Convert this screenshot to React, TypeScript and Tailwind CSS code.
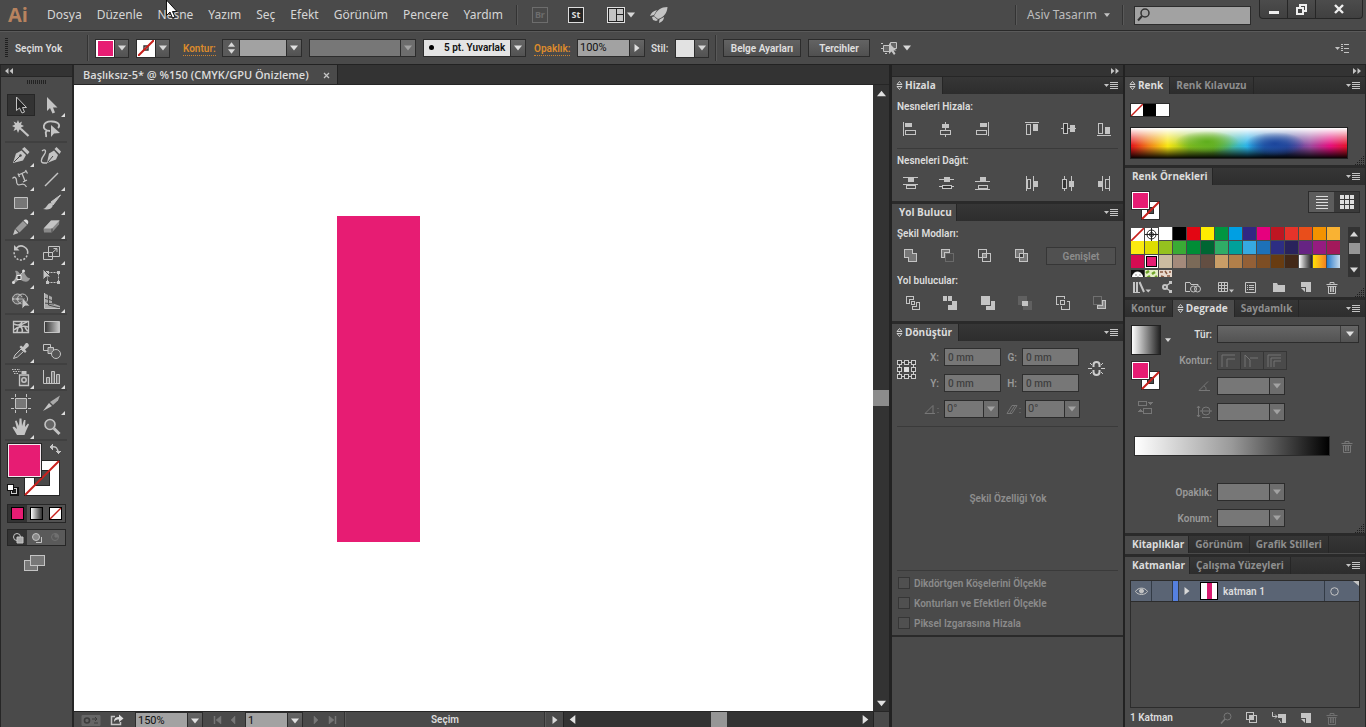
import type { ReactNode } from "react";
import clsx from "clsx";

const PINK = "#e71c73";
const ICON = "#c4c4c4";

const menus = ["Dosya", "Düzenle", "Nesne", "Yazım", "Seç", "Efekt", "Görünüm", "Pencere", "Yardım"];

const swatchRows = [
  ["#ffffff", "#000000", "#e30613", "#ffed00", "#009640", "#009fe3", "#312783", "#e6007e", "#be1622", "#e6332a", "#e94e1b", "#f39200", "#f9b233"],
  ["#fcea10", "#dedc00", "#95c11f", "#3aaa35", "#008d36", "#006633", "#2fac66", "#00a19a", "#36a9e1", "#1d71b8", "#2d2e83", "#29235c", "#662483", "#951b81", "#a3195b"],
  ["#d60b52", "#e71c73", "#cbbba0", "#a48a7b", "#7b6a58", "#634e42", "#ca9e67", "#b17f4a", "#936037", "#7d4e24", "#683c11", "#432918"],
];

type SvgProps = { w: number; h: number; children: ReactNode; color?: string; crisp?: boolean; className?: string };

function Svg({ w, h, children, color = ICON, crisp, className }: SvgProps) {
  return (
    <svg
      width={w}
      height={h}
      viewBox={`0 0 ${w} ${h}`}
      fill="none"
      stroke={color}
      shapeRendering={crisp ? "crispEdges" : undefined}
      className={clsx("block shrink-0", className)}
      aria-hidden="true"
    >
      {children}
    </svg>
  );
}

function Arrow({ dir = "down", color = "#d8d8d8", size = 8 }: { dir?: "down" | "up" | "left" | "right"; color?: string; size?: number }) {
  const d = {
    down: "M0 1.5H8L4 6.5Z",
    up: "M0 6.5H8L4 1.5Z",
    left: "M6.5 0V8L1.5 4Z",
    right: "M1.5 0V8L6.5 4Z",
  }[dir];
  return (
    <svg width={size} height={size} viewBox="0 0 8 8" className="block shrink-0" aria-hidden="true">
      <path d={d} fill={color} />
    </svg>
  );
}

function Divider({ className }: { className?: string }) {
  return <div className={clsx("w-[2px] shrink-0 border-l border-[#333] bg-[#595959]", className)} />;
}

// A text value or an empty field with a drop-down box on its right
function Combo({ label, value = "", className, tone = "light", dir = "down" }: {
  label: string;
  value?: string;
  className?: string;
  tone?: "light" | "off" | "white" | "flat";
  dir?: "down" | "right";
}) {
  const off = tone === "off";
  return (
    <span className={clsx("relative block h-[18px] shrink-0 border border-[#2c2c2c]", className)}>
      <select
        aria-label={label}
        disabled={off}
        className={clsx(
          "block h-full w-full appearance-none pr-4 leading-4 opacity-100 outline-none",
          tone === "light" && "bg-[#a2a2a2] pl-[2px] text-[11px] font-normal text-[#111]",
          tone === "off" && "bg-[#777] pl-[2px] text-[11px] font-normal text-[#3c3c3c]",
          tone === "white" && "bg-[#e4e4e4] pl-5 text-[10px] font-semibold text-[#111]",
          tone === "flat" && "bg-linear-to-b from-[#666] to-[#535353]"
        )}
      >
        <option>{value}</option>
      </select>
      <span
        className={clsx(
          "pointer-events-none absolute inset-y-0 right-0 flex w-[15px] items-center justify-center border-l border-[#2c2c2c]",
          off ? "bg-[#6d6d6d]" : "bg-linear-to-b from-[#666] to-[#525252]",
          tone === "flat" && "w-[18px] border-[#3c3c3c]"
        )}
      >
        <Arrow dir={dir} color={off ? "#a2a2a2" : "#e0e0e0"} />
      </span>
    </span>
  );
}

function None({ size = 14, box = false }: { size?: number; box?: boolean }) {
  return (
    <svg width={size} height={size} viewBox="0 0 16 16" className="block shrink-0" aria-hidden="true">
      <path d="M0 0H16V16H0Z" fill="#fff" />
      {box && <path d="M6 6H10V10H6Z" fill="#fff" stroke="#333" strokeWidth="1.4" />}
      <path d="M0 16L16 0" stroke="#c8201c" strokeWidth="2" />
    </svg>
  );
}

function SwatchDrop({ label, children }: { label: string; children: ReactNode }) {
  return (
    <button aria-label={label} className="flex h-[19px] w-[34px] shrink-0 border border-[#2c2c2c]">
      <span className="flex h-full w-[18px] items-center justify-center bg-white">{children}</span>
      <span className="flex h-full flex-1 items-center justify-center border-l border-[#2c2c2c] bg-linear-to-b from-[#666] to-[#525252]">
        <Arrow />
      </span>
    </button>
  );
}

function FillStroke() {
  return (
    <Svg w={30} h={30} crisp>
      <path d="M10.5 10.5H28.5V28.5H10.5Z" fill="#fff" stroke="#2c2c2c" />
      <path d="M16.5 16.5H22.5V22.5H16.5Z" fill="#4a4a4a" stroke="#2c2c2c" />
      <path d="M11 28L28 11" stroke="#c8201c" strokeWidth="2" shapeRendering="auto" />
      <path d="M0.5 0.5H18.5V18.5H0.5Z" fill="#fff" stroke="#2c2c2c" />
      <path d="M2 2H17V17H2Z" fill={PINK} stroke="none" />
    </Svg>
  );
}

function MenuIcon() {
  return (
    <Svg w={15} h={10} crisp>
      <path d="M0 3H5L2.500 6Z" fill={ICON} stroke="none" shapeRendering="auto" />
      <path d="M6 1.500H14M6 3.500H14M6 5.500H14M6 7.500H14" />
    </Svg>
  );
}

function TabBar({ tabs, active = 0, updown = true, menu = true }: { tabs: string[]; active?: number; updown?: boolean; menu?: boolean }) {
  return (
    <div className="flex h-[17px] shrink-0 items-stretch bg-linear-to-b from-[#363636] to-[#2d2d2d] font-['Open_Sans','Noto_Sans',sans-serif]">
      {tabs.map((tab, i) => (
        <button
          key={tab}
          className={clsx(
            "flex items-center gap-[2px] border-r border-[#262626] pb-px text-[10px] leading-4 font-bold",
            i === active ? "bg-[#4a4a4a] text-[#dcdcdc]" : "px-[6px] text-[#8e8e8e]",
            i === active && (updown ? "pr-[6px] pl-[4px]" : "pr-[4px] pl-[7px]")
          )}
        >
          {i === active && updown && (
            <Svg w={7} h={11} color="#d0d0d0">
              <path d="M1 4.500L3.500 1.500L6 4.500ZM1 6.500L3.500 9.500L6 6.500Z" />
            </Svg>
          )}
          {tab}
        </button>
      ))}
      {menu && (
        <button aria-label="Panel menüsü" className="mr-1 ml-auto flex items-center">
          <MenuIcon />
        </button>
      )}
    </div>
  );
}

function Grip() {
  return (
    <Svg w={10} h={10} color="#1e1e1e" crisp className="absolute right-0 bottom-0">
      <path d="M8 1.500H9M6 3.500H7M8 3.500H9M4 5.500H5M6 5.500H7M8 5.500H9M2 7.500H3M4 7.500H5M6 7.500H7M8 7.500H9M0 9.500H1M2 9.500H3M4 9.500H5M6 9.500H7M8 9.500H9" />
    </Svg>
  );
}

function Trash({ color = ICON }: { color?: string }) {
  return (
    <Svg w={12} h={13} color={color}>
      <path d="M0.500 3.500H11.500M4 3V1.500H8V3M1.500 5.500H10.500M2.500 6V12.500H9.500V6M4.500 6V11M6 6V11M7.500 6V11" />
    </Svg>
  );
}

function NewItem() {
  return (
    <Svg w={12} h={12}>
      <path d="M1 1H11V11H6V6H1Z" fill={ICON} stroke="none" />
      <path d="M1 7H5V11Z" fill={ICON} stroke="none" />
    </Svg>
  );
}

function Tool({ label, active, more, children }: { label: string; active?: boolean; more?: boolean; children: ReactNode }) {
  return (
    <button aria-label={label} className="relative flex h-6 w-[31px] items-center justify-center">
      <span className={clsx("flex h-[22px] w-7 items-center justify-center", active && "border border-[#262626] bg-[#333]")}>
        <Svg w={24} h={24}>
          {children}
        </Svg>
      </span>
      {more && (
        <Svg w={4} h={4} className="absolute right-[2px] bottom-0">
          <path d="M4 0V4H0Z" fill="#ddd" stroke="none" />
        </Svg>
      )}
    </button>
  );
}

function ToolGroup({ children }: { children: ReactNode }) {
  return <div className="grid grid-cols-2 border-b-2 border-[#404040]">{children}</div>;
}

function Toolbox() {
  return (
    <aside className="flex w-[74px] shrink-0 flex-col border-r-2 border-l border-[#262626] bg-[#4a4a4a]">
      <div className="flex h-3 items-center border-b border-[#262626] bg-[#333] pl-1">
        <Svg w={8} h={6}>
          <path d="M3.500 0V6L0 3ZM8 0V6L4.500 3Z" fill={ICON} stroke="none" />
        </Svg>
      </div>
      <div className="flex h-4 justify-center pt-[3px]">
        <Svg w={20} h={5} color="#222" crisp>
          <path d="M0.500 0V4M2.500 0V4M4.500 0V4M6.500 0V4M8.500 0V4M10.500 0V4M12.500 0V4M14.500 0V4M16.500 0V4M18.500 0V4" />
        </Svg>
      </div>
      <div className="ml-1 w-[62px]">
        <ToolGroup>
          <Tool label="Seçim" active>
            <path d="M7.500 4V17.500L10.500 15L13 20L15.500 19L13.500 14.500H17.500Z" fill="#262626" />
          </Tool>
          <Tool label="Doğrudan Seçim" more>
            <path d="M7 4V18L10 15L12.500 20.500L15 19.500L13 14.500H17.500Z" fill={ICON} stroke="none" />
          </Tool>
          <Tool label="Sihirli Değnek">
            <path d="M9 3L10.200 6L13 4.500L12 7.500L15 9L12 10.500L13.500 13.500L10.500 12.500L9 16L7.700 12.500L4.500 14L6 10.500L3 9L6 7.500L4.500 4.500L7.700 6Z" fill={ICON} stroke="none" />
            <path d="M12 12L19.500 19" strokeWidth="2.200" />
          </Tool>
          <Tool label="Kement">
            <path d="M10 14C0 13 3 4 12 4.500C20 5 20 9 18 11M7 13.500C4 16 7 17 6 20" strokeWidth="1.800" />
            <path d="M11 8V20L14 16.500L20 16Z" fill={ICON} stroke="none" />
          </Tool>
        </ToolGroup>
        <ToolGroup>
          <Tool label="Kalem" more>
            <path d="M4 20L7 10.500L12.500 7.500L17 12L14 17.500Z" fill={ICON} stroke="none" />
            <path d="M13 6L15.500 4L20.500 9L18.500 11.500Z" fill={ICON} stroke="none" />
            <path d="M5 19L11 13" stroke="#444" />
            <circle cx="11.500" cy="12.500" r="1.200" fill="#444" stroke="none" />
          </Tool>
          <Tool label="Eğrilik">
            <path d="M7 20L9 10.500L14 7.500L18 12L16 16.500Z" fill={ICON} stroke="none" />
            <path d="M14.500 6L16.500 4L21 8.500L19.500 11Z" fill={ICON} stroke="none" />
            <path d="M8 19L13 13" stroke="#444" />
            <path d="M2 8C5 5 7 8 4 12C1 16 0 20 4 20H7" strokeWidth="1.300" />
          </Tool>
          <Tool label="Yol Üzerinde Yazı" more>
            <path d="M3.500 11.500C5 9 7.500 10.500 7.500 13.500C7.500 18 9 18.500 12 17.500C15 16.500 16 17.500 17.500 20" strokeWidth="1.300" />
            <path d="M9.500 8L17 4.500M16.500 3L18.500 6.500M9 6.500L10.500 10M13 6.500L16 14M14 15L18 13" strokeWidth="1.300" />
          </Tool>
          <Tool label="Çizgi Parçası" more>
            <path d="M5 19L18 6" strokeWidth="1.400" />
          </Tool>
          <Tool label="Dikdörtgen" more>
            <path d="M5.500 6.500H18.500V17.500H5.500Z" fill="#777" />
          </Tool>
          <Tool label="Boya Fırçası" more>
            <path d="M20.500 4L11 11L13 14Z" fill={ICON} />
            <path d="M3 18C7 17 7 12 11 12C15 14 12 20 3 18Z" fill={ICON} stroke="none" />
          </Tool>
          <Tool label="Kurşun Kalem" more>
            <path d="M4 20L6 14L9.500 18Z" fill={ICON} stroke="none" />
            <path d="M6.500 13.500L14 6L18 10L10.500 17.500Z" fill="#999" stroke="none" />
            <path d="M14.500 5.500C17 3 21 6 18.500 9.500Z" fill="#ddd" stroke="none" />
          </Tool>
          <Tool label="Silgi" more>
            <path d="M3.500 14L11 5.500L19.500 5L19 9.500L12 17.500H4Z" fill="#888" stroke="none" />
            <path d="M3.500 13.500L11 5.500H19.500L12 13.500Z" fill={ICON} stroke="none" />
            <path d="M12 13.500V17.500" stroke="#444" />
          </Tool>
        </ToolGroup>
        <ToolGroup>
          <Tool label="Döndür" more>
            <path d="M7.500 7A6.500 6.500 0 0 1 18.500 13" strokeWidth="1.500" />
            <path d="M18 14.500A6.500 6.500 0 0 1 5.500 10.500" strokeWidth="1.500" strokeDasharray="2 1.500" />
            <path d="M5 4V9.500H10.500Z" fill={ICON} stroke="none" />
          </Tool>
          <Tool label="Ölçekle" more>
            <path d="M3.500 11.500H12.500V18.500H3.500ZM8.500 5.500H19.500V15.500H8.500Z" />
            <path d="M12 12L17 7.500M13.500 7.500H17V11" />
          </Tool>
          <Tool label="Genişlik" more>
            <path d="M6 6C10 4 10 11 13 8C16 4 16 14 21 13C20 18 15 17 12 15C9 13 7 20 3 17C7 14 8 9 6 6Z" fill="#999" stroke="none" />
            <path d="M4 17.500L15 6" />
            <path d="M8 10.500H12V14.500H8Z" fill="#444" stroke="#eee" />
            <circle cx="4.500" cy="17.500" r="1.500" fill="#ddd" stroke="none" />
            <circle cx="14.500" cy="6" r="1.500" fill="#ddd" stroke="none" />
          </Tool>
          <Tool label="Serbest Dönüştür">
            <path d="M7.500 7.500H18.500V17.500H7.500Z" strokeDasharray="2 1" />
            <path d="M6 6H9V9H6ZM17 6H20V9H17ZM17 16H20V19H17ZM6 16H9V19H6Z" fill={ICON} stroke="none" />
            <path d="M3 4V15L6 12H11Z" fill={ICON} stroke="#4a4a4a" />
          </Tool>
          <Tool label="Şekil Oluşturucu" more>
            <circle cx="8.500" cy="10" r="5" fill="#666" />
            <circle cx="13.500" cy="10" r="5" />
            <path d="M4 10H16" stroke="#eee" strokeDasharray="1.500 1" />
            <path d="M13 8V20L16 17H21Z" fill={ICON} stroke="#4a4a4a" strokeWidth="0.800" />
          </Tool>
          <Tool label="Perspektif Izgarası" more>
            <path d="M4 4L12 8V14L20 17V19H4Z" fill="#aaa" stroke="none" />
            <path d="M8.500 4V16L20 19M4 9L12 11.500M4 14L14 15" stroke="#4a4a4a" />
            <path d="M4.500 4V19.500H20" />
          </Tool>
        </ToolGroup>
        <ToolGroup>
          <Tool label="Kafes">
            <path d="M4.500 6.500H19.500V17.500H4.500Z" fill="#444" strokeWidth="1.300" />
            <path d="M5 9C9 11 12 10 13 7M5 15C8 12 14 10 19 12M8 17C8 13 12 9 18 7M11 11C13 13 14 15 13 17M15 11C17 13 17 15 19 16" strokeWidth="1.600" />
          </Tool>
          <Tool label="Degrade">
            <defs>
              <linearGradient id="tool-grad">
                <stop stopColor="#333" />
                <stop offset="1" stopColor="#ccc" />
              </linearGradient>
            </defs>
            <path d="M4.500 6.500H19.500V17.500H4.500Z" fill="url(#tool-grad)" />
          </Tool>
          <Tool label="Damlalık" more>
            <path d="M4.500 19.500L6 16L12 10L14.500 12.500L8.500 18Z" fill="#555" />
            <path d="M10.500 8L12 6.500L14 8L16.500 4.500C18 3 21 5.500 19.500 7.500L16 10.500L17.500 12.500L16 14Z" fill={ICON} stroke="none" />
          </Tool>
          <Tool label="Karışım">
            <path d="M3.500 5.500H10.500V11.500H3.500Z" />
            <path d="M8 8.500H13.500V14.500H8Z" fill="#777" />
            <circle cx="16" cy="15" r="4.500" fill="#555" />
          </Tool>
        </ToolGroup>
        <ToolGroup>
          <Tool label="Simge Püskürtücü" more>
            <path d="M10.500 10H19.500V20.500H10.500Z" fill="#555" strokeWidth="1.300" />
            <path d="M12.500 6H17.500V9H12.500Z" fill={ICON} stroke="none" />
            <circle cx="15" cy="15" r="2.200" strokeWidth="1.500" />
            <path d="M3 4.500H11M4 6.500H12M5 8.500H10" strokeDasharray="1.500 1" />
          </Tool>
          <Tool label="Sütun Grafiği" more>
            <path d="M3.500 5V18.500H20" />
            <path d="M6.500 18V12.500H9.500V18M11.500 18V6.500H14.500V18M16.500 18V9.500H19.500V18" fill="#777" />
          </Tool>
        </ToolGroup>
        <ToolGroup>
          <Tool label="Çalışma Yüzeyi">
            <path d="M6.500 7.500H17.500V17.500H6.500Z" fill="#777" />
            <path d="M2 7.500H5M19 7.500H22M2 17.500H5M19 17.500H22M6.500 3V6M17.500 3V6M6.500 19V22M17.500 19V22" />
          </Tool>
          <Tool label="Dilim" more>
            <path d="M3 20L9 12L12 15Z" fill={ICON} stroke="none" />
            <path d="M10 11L20 4.500L18 9.500L13 14Z" fill="#aaa" stroke="none" />
          </Tool>
          <Tool label="El" more>
            <path d="M8 20L3.500 12.500L5 11.500L8 14L6 6L7.500 5.500L10 11L10.500 3.500H12.500L13 11L15 5H16.500L16 12L19 8.500L20 9.500L17 16L15.500 20Z" fill={ICON} stroke="none" />
          </Tool>
          <Tool label="Büyüteç">
            <circle cx="10" cy="9.500" r="5" fill="#666" strokeWidth="1.600" />
            <path d="M14 13.500L19.500 19" strokeWidth="3" />
          </Tool>
        </ToolGroup>
      </div>
      <div className="flex flex-col pl-[5px]">
        <button aria-label="Dolgu ve kontur" className="mt-px ml-px">
          <Svg w={56} h={56} crisp>
            <path d="M17.500 18.500H52.500V53.500H17.500Z" fill="#fff" stroke="#262626" />
            <path d="M27.500 28.500H42.500V43.500H27.500Z" fill="#4a4a4a" stroke="#262626" />
            <path d="M18 53L52 19" stroke="#c8201c" strokeWidth="2" shapeRendering="auto" />
            <path d="M0.500 1.500H34.500V35.500H0.500Z" fill="#f4e8ee" stroke="#262626" />
            <path d="M2 3H33V34H2Z" fill={PINK} stroke="none" />
            <path d="M44 5C49 4 51 6 51 11" strokeWidth="1.400" shapeRendering="auto" />
            <path d="M46 2V8L42 5ZM48 9H54L51 12Z" fill={ICON} stroke="none" />
            <path d="M4.500 46.500H10.500V52.500H4.500Z" fill="#222" stroke="#111" strokeWidth="3" />
            <path d="M4.500 46.500H9.500V51.500H4.500Z" stroke="#ccc" />
            <path d="M0.500 42.500H6.500V48.500H0.500Z" fill="#fff" stroke="#111" />
          </Svg>
        </button>
        <div className="mt-[6px] ml-px flex h-[19px] w-[59px] border border-[#262626] bg-[#525252]">
          <button aria-label="Renk" className="flex w-[19px] items-center justify-center bg-[#333]">
            <span className="size-[13px] border border-black bg-[#e71c73]" />
          </button>
          <button aria-label="Degrade dolgu" className="flex w-[19px] items-center justify-center">
            <span className="size-[13px] border border-black bg-linear-to-r from-white to-[#333]" />
          </button>
          <button aria-label="Yok" className="flex flex-1 items-center justify-center">
            <span className="border border-black">
              <None size={11} />
            </span>
          </button>
        </div>
        <div className="mt-[6px] ml-px flex h-[17px] w-[59px] border border-[#262626] bg-[#5a5a5a]">
          {["Normal çizim", "Arkaya çizim", "İçine çizim"].map((label, i) => (
            <button key={label} aria-label={label} className={clsx("flex w-[19px] items-center justify-center", i === 0 && "bg-[#333]")}>
              <Svg w={12} h={12} color={i === 2 ? "#707070" : ICON}>
                <circle cx="5" cy="5" r="3.500" fill={i === 1 ? "#888" : "none"} />
                <path
                  d={["M5 5H11V11H5Z", "M10.500 5V10.500H5", "M5 5V1.500A3.500 3.500 0 0 1 8.500 5Z"][i]}
                  fill={["#aaa", "none", "#707070"][i]}
                />
              </Svg>
            </button>
          ))}
        </div>
        <button aria-label="Ekran modu" className="mt-2 ml-[18px]">
          <Svg w={22} h={18} crisp>
            <path d="M0.500 6.500H13.500V16.500H0.500Z" fill="#777" />
            <path d="M6.500 1.500H20.500V11.500H6.500Z" fill="#777" />
          </Svg>
        </button>
      </div>
    </aside>
  );
}

function MenuBar() {
  return (
    <header className="flex h-[31px] shrink-0 items-center border-b border-[#2a2a2a] bg-[#4a4a4a] font-['Noto_Sans',sans-serif] text-xs text-[#d6d6d6]">
      <span className="w-[47px] pl-2 font-['Open_Sans',sans-serif] text-xl leading-7 font-bold text-[#b8835f]">Ai</span>
      <nav className="flex gap-[15px]">
        {menus.map((menu) => (
          <button key={menu}>{menu}</button>
        ))}
      </nav>
      <Divider className="ml-[13px] h-5" />
      <button className="ml-[14px] h-4 w-4 border border-[#6d6d6d] text-[9px] leading-3 font-bold text-[#6d6d6d]">Br</button>
      <button className="ml-5 h-4 w-4 border border-[#ddd] bg-[#262626] text-[9px] leading-3 font-bold text-[#ddd]">St</button>
      <button aria-label="Belgeleri düzenle" className="ml-[23px] flex items-center gap-[2px]">
        <Svg w={18} h={16} color="#222" crisp>
          <path d="M0.500 0.500H17.500V15.500H0.500Z" fill={ICON} stroke="#e0e0e0" />
          <path d="M1.500 1.500H16.500V14.500H1.500ZM9.500 1.500V14.500M9.500 7.500H16.500" />
        </Svg>
        <Arrow />
      </button>
      <button aria-label="GPU performansı" className="ml-[14px]">
        <Svg w={20} h={18}>
          <path d="M18.500 1C12 1 8 4 5 10L9 13C15 11 18 7 18.500 1Z" fill={ICON} stroke="none" />
          <path d="M8 4C4 5 2 7 1 10L5 9ZM15 11C15 14 13 16 10 17L10.500 13.500Z" fill={ICON} stroke="none" />
          <path d="M3 11L4 14L7 15L9 14L5 10.500Z" fill={ICON} stroke="none" />
        </Svg>
      </button>
      <Divider className="ml-auto h-5" />
      <button className="ml-[10px] flex items-center gap-[7px] text-[#bdbdbd]">
        Asiv Tasarım
        <Arrow size={6} color={ICON} />
      </button>
      <Divider className="ml-3 h-5" />
      <label className="ml-[10px] flex h-[19px] w-[117px] items-center border border-[#2c2c2c] bg-[#a2a2a2] pl-[2px]">
        <Svg w={14} h={14} color="#333">
          <circle cx="8" cy="5" r="4" strokeWidth="1.500" />
          <path d="M5 8L1 12.500" strokeWidth="2" />
        </Svg>
        <input aria-label="Ara" className="w-full bg-transparent outline-none" />
      </label>
      <div className="mr-[3px] ml-2 flex h-[19px] self-start rounded-b border border-t-0 border-[#262626] bg-linear-to-b from-[#4c4c4c] to-[#404040]">
        <button aria-label="Simge durumuna küçült" className="flex w-7 items-center justify-center border-r border-[#262626]">
          <Svg w={10} h={14} crisp>
            <path d="M0 10.500H10" stroke="#eee" strokeWidth="3" />
          </Svg>
        </button>
        <button aria-label="Önceki boyut" className="flex w-7 items-center justify-center border-r border-[#262626]">
          <Svg w={14} h={12} color="#eee" crisp>
            <path d="M5 2H11V8H5Z" strokeWidth="2" />
            <path d="M2 5H8V11H2Z" fill="#444" strokeWidth="2" />
          </Svg>
        </button>
        <button aria-label="Kapat" className="flex w-[46px] items-center justify-center">
          <Svg w={10} h={10} color="#eee">
            <path d="M1 1L9 9M9 1L1 9" strokeWidth="2.400" />
          </Svg>
        </button>
      </div>
    </header>
  );
}

function ControlBar() {
  const push = "h-[18px] shrink-0 border border-[#2c2c2c] bg-linear-to-b from-[#636363] to-[#505050] text-[#e0e0e0]";
  const link = "border-b border-dotted border-[#c9812f] leading-3 text-[#dd8a2c]";
  return (
    <div className="flex h-[34px] shrink-0 items-center border-t border-b border-t-[#5a5a5a] border-b-[#222] bg-[#4a4a4a] pl-[5px] text-[10px] font-semibold whitespace-nowrap">
      <Svg w={3} h={20} color="#1f1f1f">
        <path d="M1.500 0V20" strokeWidth="3" strokeDasharray="1 1" />
      </Svg>
      <span className="w-[79px] pl-[7px]">Seçim Yok</span>
      <Divider className="mr-[6px] h-[26px]" />
      <SwatchDrop label="Dolgu">
        <span className="size-[15px] bg-[#e71c73]" />
      </SwatchDrop>
      <span className="w-[7px]" />
      <SwatchDrop label="Kontur rengi">
        <None size={16} box />
      </SwatchDrop>
      <span className="w-[52px] pl-[13px]">
        <button className={link}>Kontur:</button>
      </span>
      <button aria-label="Kontur kalınlığı adımı" className="flex h-[18px] w-[17px] flex-col items-center justify-between border border-r-0 border-[#2c2c2c] bg-[#5a5a5a] py-px">
        <Arrow dir="up" size={7} />
        <Arrow size={7} />
      </button>
      <Combo label="Kontur kalınlığı" className="mr-[7px] w-[63px]" />
      <Combo label="Değişken genişlik" tone="off" className="mr-[7px] w-[107px]" />
      <span className="relative">
        <Combo label="Fırça" tone="white" value="5 pt. Yuvarlak" className="w-[103px]" />
        <span className="absolute top-[6px] left-[6px] size-[5px] rounded-full bg-black" />
      </span>
      <span className="w-[51px] pl-2">
        <button className={link}>Opaklık:</button>
      </span>
      <Combo label="Opaklık" value="100%" dir="right" className="w-[68px]" />
      <span className="w-[30px] pl-[6px]">Stil:</span>
      <SwatchDrop label="Grafik stili">
        <span className="size-full bg-[#e2e2e2]" />
      </SwatchDrop>
      <Divider className="mx-[6px] h-[26px]" />
      <button className={clsx(push, "w-[78px]")}>Belge Ayarları</button>
      <button className={clsx(push, "mx-[7px] w-[62px]")}>Tercihler</button>
      <button aria-label="Benzer nesneleri seç" className="ml-1 flex items-center gap-[5px]">
        <Svg w={17} h={16}>
          <path d="M2.500 5.500H8.500V11.500H2.500ZM9.500 2.500H15.500V8.500H9.500Z" fill="#666" />
          <path d="M0 3.500H2M0 8.500H2M4 13.500H6" />
          <path d="M8 3V14L10.500 11.500L13 15L14.500 13.500L12.500 10.500H15.500Z" fill={ICON} stroke="none" />
        </Svg>
        <Arrow />
      </button>
      <button aria-label="Denetim menüsü" className="mr-4 ml-auto">
        <Svg w={15} h={11} crisp>
          <path d="M0 4H5L2.500 7Z" fill={ICON} stroke="none" shapeRendering="auto" />
          <path d="M6 1.500H8M9 1.500H14M6 3.500H8M6 5.500H8M9 5.500H14M6 7.500H8M9 9.500H14" />
        </Svg>
      </button>
    </div>
  );
}

function ScrollArrow({ dir, label }: { dir: "up" | "down" | "left" | "right"; label: string }) {
  return (
    <button aria-label={label} className="flex size-4 shrink-0 items-center justify-center bg-[#333]">
      <Arrow dir={dir} size={9} color="#e0e0e0" />
    </button>
  );
}

function NavIcon({ d, label }: { d: string; label: string }) {
  return (
    <button aria-label={label} className="flex w-4 justify-center">
      <Svg w={9} h={8} color="#777">
        <path d={d} fill="#777" strokeWidth="0.500" />
      </Svg>
    </button>
  );
}

function StatusBar() {
  return (
    <div className="flex h-4 shrink-0 items-start border-t border-[#262626] bg-[#4a4a4a] text-[10px] font-semibold">
      <div className="flex h-4 items-center pl-[7px]">
        <Svg w={20} h={11}>
          <path d="M1 0.500H19V10.500H1Z" fill="#666" stroke="#666" />
          <circle cx="6" cy="5.500" r="2.500" stroke="#3c3c3c" strokeWidth="1.600" />
          <path d="M11 4H16M14 2L16 4L14 6M17 8H13" stroke="#3c3c3c" />
        </Svg>
        <Svg w={14} h={12} className="mx-[9px]">
          <path d="M5 2.500H1.500V10.500H10.500V8" strokeWidth="1.500" />
          <path d="M4 8C4 4 6 3 9 3V0.500L13.500 4.500L9 8V5.500C7 5.500 5 6 4 8Z" fill="#ddd" stroke="none" />
        </Svg>
      </div>
      <Combo label="Yakınlaştırma" value="150%" className="mr-[6px] ml-[2px] w-[68px]" />
      <div className="flex h-4 w-[36px] items-center">
        <NavIcon label="İlk" d="M1 0V8H2V0ZM8 0V8L3 4Z" />
        <NavIcon label="Önceki" d="M6 0V8L2 4Z" />
      </div>
      <Combo label="Çalışma yüzeyi" value="1" className="mr-[5px] w-[58px]" />
      <div className="flex h-4 w-[36px] items-center">
        <NavIcon label="Sonraki" d="M2 0V8L6 4Z" />
        <NavIcon label="Son" d="M7 0V8H8V0ZM1 0V8L6 4Z" />
      </div>
      <Divider className="h-[15px]" />
      <span className="w-[198px] pt-px text-center leading-[14px]">Seçim</span>
      <Divider className="h-[15px]" />
      <button aria-label="Durum menüsü" className="flex h-4 w-[17px] items-center justify-center">
        <Arrow dir="right" />
      </button>
      <div className="flex h-[15px] min-w-0 flex-1 items-center justify-between border-l border-[#222] bg-[#333]">
        <ScrollArrow dir="left" label="Sola kaydır" />
        <span className="h-[15px] w-4 bg-[#969696]" />
        <ScrollArrow dir="right" label="Sağa kaydır" />
      </div>
      <span className="h-[15px] w-4 border-l border-[#222] bg-[#4a4a4a]" />
    </div>
  );
}

function Document() {
  return (
    <main className="flex min-w-0 flex-1 flex-col border-r-2 border-[#222] bg-[#333]">
      <div className="flex h-5 shrink-0 border-b border-[#262626]">
        <div className="flex items-center border-r border-[#222] bg-[#4a4a4a] pt-px pr-[7px] pl-[9px] font-['Open_Sans',sans-serif] text-[11px] leading-4 font-semibold">
          Başlıksız-5* @ %150 (CMYK/GPU Önizleme)
          <button aria-label="Sekmeyi kapat" className="ml-[14px]">
            <Svg w={7} h={7}>
              <path d="M1 1L6 6M6 1L1 6" strokeWidth="1.300" />
            </Svg>
          </button>
        </div>
      </div>
      <div className="flex min-h-0 flex-1">
        <div className="relative min-w-0 flex-1 overflow-hidden bg-white">
          <div className="absolute top-[131px] left-[263px] h-[326px] w-[83px] bg-[#e71c73]" />
        </div>
        <div className="flex w-4 flex-col items-center justify-between bg-[#333]">
          <ScrollArrow dir="up" label="Yukarı kaydır" />
          <span className="h-4 w-full bg-[#8c8c8c]" />
          <ScrollArrow dir="down" label="Aşağı kaydır" />
        </div>
      </div>
      <StatusBar />
    </main>
  );
}

function DockHeader() {
  return (
    <div className="flex h-3 shrink-0 items-center justify-end border-b border-[#262626] bg-[#333] pr-1">
      <Svg w={8} h={6}>
        <path d="M0 0V6L3.500 3ZM4.500 0V6L8 3Z" fill={ICON} stroke="none" />
      </Svg>
    </div>
  );
}

const solid = { fill: ICON, stroke: "none" };
const alignIcons: Record<string, ReactNode> = {
  "Sola hizala": <><path d="M0.500 0V14" /><path d="M2 1H9V5H2Z" {...solid} /><path d="M2.500 8.500H12.500V12.500H2.500Z" /></>,
  "Yatay ortala": <><path d="M6.500 0V15" /><path d="M3 2H10V6H3Z" {...solid} /><path d="M1.500 8.500H11.500V12.500H1.500Z" fill="#4a4a4a" /></>,
  "Sağa hizala": <><path d="M13.500 0V14" /><path d="M5 1H12V5H5Z" {...solid} /><path d="M1.500 8.500H11.500V12.500H1.500Z" /></>,
  "Üste hizala": <><path d="M0 0.500H14" /><path d="M8 2H13V9H8Z" {...solid} /><path d="M1.500 2.500H5.500V12.500H1.500Z" /></>,
  "Dikey ortala": <><path d="M0 6.500H15" /><path d="M9 3H14V10H9Z" {...solid} /><path d="M2.500 1.500H6.500V11.500H2.500Z" fill="#333" /></>,
  "Alta hizala": <><path d="M0 13.500H14" /><path d="M8 5H13V12H8Z" {...solid} /><path d="M1.500 1.500H5.500V11.500H1.500Z" /></>,
};
const distributeIcons: Record<string, ReactNode> = {
  "Üstten dağıt": <><path d="M0 1.500H15M0 8.500H15" /><path d="M5 2H11V6H5Z" {...solid} /><path d="M3.500 9.500H12.500V12.500H3.500Z" /></>,
  "Dikey dağıt": <><path d="M0 3.500H15M0 10.500H15" /><path d="M5 1H11V6H5Z" {...solid} /><path d="M3.500 9.500H12.500V12.500H3.500Z" fill="#333" /></>,
  "Alttan dağıt": <><path d="M0 5.500H15M0 13.500H15" /><path d="M5 1H11V5H5Z" {...solid} /><path d="M3.500 9.500H12.500V12.500H3.500Z" /></>,
  "Soldan dağıt": <><path d="M1.500 0V15M8.500 0V15" /><path d="M9 5H13V11H9Z" {...solid} /><path d="M2.500 3.500H5.500V12.500H2.500Z" /></>,
  "Yatay dağıt": <><path d="M3.500 0V15M10.500 0V15" /><path d="M8 5H13V11H8Z" {...solid} /><path d="M1.500 3.500H5.500V12.500H1.500Z" fill="#333" /></>,
  "Sağdan dağıt": <><path d="M5.500 0V15M12.500 0V15" /><path d="M1 5H5V11H1Z" {...solid} /><path d="M8.500 3.500H12.500V12.500H8.500Z" /></>,
};

function IconRow({ icons }: { icons: Record<string, ReactNode> }) {
  const names = Object.keys(icons);
  return (
    <div className="flex justify-between pr-px">
      {[names.slice(0, 3), names.slice(3)].map((group, i) => (
        <div key={i} className="flex">
          {group.map((name) => (
            <button key={name} aria-label={name} className="flex h-5 w-9 items-center justify-center">
              <Svg w={15} h={15} crisp>
                {icons[name]}
              </Svg>
            </button>
          ))}
        </div>
      ))}
    </div>
  );
}

const A = "M0.500 0.500H8.500V8.500H0.500Z";
const B = "M4.500 4.500H12.500V12.500H4.500Z";
const shapeModes: Record<string, ReactNode> = {
  Birleştir: <><path d="M0.500 0.500H8.500V4.500H12.500V12.500H4.500V8.500H0.500Z" fill="#777" /></>,
  "Öndekini çıkar": <><path d={B} stroke="#6a6a6a" /><path d="M0.500 0.500H8.500V3.500H3.500V8.500H0.500Z" fill="#777" /></>,
  Kesiştir: <><path d={A} /><path d={B} /><path d="M4.500 4.500H8.500V8.500H4.500Z" fill="#888" /></>,
  "Hariç tut": <><path d={A} fill="#777" /><path d={B} fill="#777" /><path d="M4.500 4.500H8.500V8.500H4.500Z" fill="#3c3c3c" /></>,
};
const pathfinders: Record<string, ReactNode> = {
  Böl: <><path d="M0.500 0.500H7.500V3.500H3.500V7.500H0.500ZM5.500 5.500H8.500V8.500H5.500ZM10.500 6.500H13.500V13.500H6.500V10.500H10.500Z" /></>,
  Kırp: <><path d="M0 0H4V5H0ZM5 0H9V5H14V14H5V9H9V5H5Z" {...solid} /></>,
  "Kaynaştır": <><path d="M0 0H9V9H0ZM10 5H14V14H5V10H10Z" {...solid} /></>,
  Kes: <><path d="M0 0H9V9H0ZM5 5H14V14H5Z" fill="#606060" stroke="none" /><path d="M4 5H10V10H4Z" {...solid} /></>,
  "Ana hat": <><path d="M8.500 3V0.500H0.500V8.500H3M5.500 10V13.500H13.500V5.500H11" /><path d="M4.500 4.500H8.500V8.500H4.500Z" /></>,
  "Arkadakini çıkar": <><path d={A} stroke="#707070" /><path d="M9.500 4.500H12.500V12.500H4.500V9.500H9.500Z" fill="#888" /></>,
};

function Field({ label, name }: { label: string; name: string }) {
  return (
    <label className="flex items-center text-[#999]">
      <span className="w-5 pr-[5px] text-right">{label}</span>
      <input
        aria-label={name}
        disabled
        defaultValue="0 mm"
        className="h-[18px] w-[57px] border border-[#2f2f2f] bg-[#777] px-[3px] text-[10px] font-medium text-[#404040]"
      />
    </label>
  );
}

function AlignDock() {
  return (
    <section className="flex w-[234px] shrink-0 flex-col border-r-2 border-l border-[#222] bg-[#4a4a4a] text-[10px] font-semibold">
      <DockHeader />
      <TabBar tabs={["Hizala"]} />
      <div className="h-[110px] border-b-3 border-[#2a2a2a] pt-[6px]">
        <h3 className="mb-[5px] px-[5px] leading-[14px]">Nesneleri Hizala:</h3>
        <IconRow icons={alignIcons} />
        <hr className="mx-[5px] mt-[9px] border-[#3a3a3a]" />
        <h3 className="my-[5px] px-[5px] leading-[14px]">Nesneleri Dağıt:</h3>
        <IconRow icons={distributeIcons} />
      </div>
      <TabBar tabs={["Yol Bulucu"]} updown={false} />
      <div className="h-[103px] border-b-3 border-[#2a2a2a] pt-[6px]">
        <h3 className="mb-[5px] px-[5px] leading-[14px]">Şekil Modları:</h3>
        <div className="flex items-center pr-[7px]">
          {Object.entries(shapeModes).map(([name, icon]) => (
            <button key={name} aria-label={name} className="flex h-5 w-[37px] items-center justify-center">
              <Svg w={14} h={14} crisp>{icon}</Svg>
            </button>
          ))}
          <button disabled className="ml-auto h-[18px] w-[70px] border border-[#363636] bg-[#505050] text-[#8c8c8c]">
            Genişlet
          </button>
        </div>
        <h3 className="mt-2 mb-[5px] px-[5px] leading-[14px]">Yol bulucular:</h3>
        <div className="flex justify-between pr-[5px] pl-[3px]">
          {Object.entries(pathfinders).map(([name, icon]) => (
            <button key={name} aria-label={name} className="flex h-5 w-9 items-center justify-center">
              <Svg w={14} h={14} crisp>{icon}</Svg>
            </button>
          ))}
        </div>
      </div>
      <TabBar tabs={["Dönüştür"]} />
      <div className="border-b-2 border-[#2a2a2a] px-[5px] pt-[7px] pb-[2px]">
        <div className="flex h-[70px] items-start">
          <button aria-label="Referans noktası" className="mt-3">
            <Svg w={19} h={19} color="#ccc" crisp>
              <path d="M2.500 2.500H16.500V16.500H2.500Z" />
              <path d="M0.500 0.500H4.500V4.500H0.500ZM7.500 0.500H11.500V4.500H7.500ZM14.500 0.500H18.500V4.500H14.500ZM0.500 7.500H4.500V11.500H0.500ZM14.500 7.500H18.500V11.500H14.500ZM0.500 14.500H4.500V18.500H0.500ZM7.500 14.500H11.500V18.500H7.500ZM14.500 14.500H18.500V18.500H14.500Z" fill="#3c3c3c" />
              <path d="M7 7H12V12H7Z" fill="#ddd" stroke="none" />
            </Svg>
          </button>
          <div className="ml-2 grid grid-cols-[78px_78px] gap-y-2">
            <Field label="X:" name="X konumu" />
            <Field label="G:" name="Genişlik" />
            <Field label="Y:" name="Y konumu" />
            <Field label="H:" name="Yükseklik" />
            <div className="flex items-center">
              <Svg w={15} h={12} color="#777" className="mr-[5px]">
                <path d="M11 10.500H1L9 2.500V10M14 5V6M14 9V10" />
              </Svg>
              <Combo label="Döndürme açısı" value="0°" tone="off" className="w-[55px]" />
            </div>
            <div className="flex items-center">
              <Svg w={15} h={12} color="#777" className="mx-1">
                <path d="M1 10.500L6 2.500H11L6 10.500ZM4 10L9 2.500M14 5V6M14 9V10" />
              </Svg>
              <Combo label="Yatırma açısı" value="0°" tone="off" className="w-[55px]" />
            </div>
          </div>
          <button aria-label="Oranları koru" className="mt-3 ml-2">
            <Svg w={17} h={17} color="#ccc">
              <path d="M5.500 7V5A3 3 0 0 1 11.500 5V7M5.500 10V12A3 3 0 0 0 11.500 12V10" strokeWidth="2" />
              <path d="M0 8.500H4M13 8.500H17M2 3L4 5M15 3L13 5M2 14L4 12M15 14L13 12" />
            </Svg>
          </button>
        </div>
        <hr className="mt-2 border-[#3a3a3a]" />
        <p className="flex h-[143px] items-center justify-center pl-px text-[#8e8e8e]">Şekil Özelliği Yok</p>
        <hr className="mb-[2px] border-[#3a3a3a]" />
        {["Dikdörtgen Köşelerini Ölçekle", "Konturları ve Efektleri Ölçekle", "Piksel Izgarasına Hizala"].map((text) => (
          <label key={text} className="flex h-5 items-center gap-1 px-px text-[#8a8a8a]">
            <input type="checkbox" disabled className="size-3 appearance-none border border-[#363636] bg-[#505050]" />
            {text}
          </label>
        ))}
      </div>
    </section>
  );
}

function ColorPanel() {
  return (
    <div className="relative h-[74px] border-b-3 border-[#2a2a2a] pt-[9px] pl-[5px]">
      <div className="flex h-[14px] w-[40px] border border-[#2c2c2c]">
        <button aria-label="Renk yok"><None size={12} /></button>
        <button aria-label="Siyah" className="flex-1 bg-black" />
        <button aria-label="Beyaz" className="flex-1 bg-white" />
      </div>
      <svg viewBox="0 0 216 30" preserveAspectRatio="none" className="mt-[10px] h-8 w-[218px] border border-[#222]" role="img" aria-label="Renk tayfı">
        <defs>
          <linearGradient id="hue">
            <stop stopColor="#e3141b" />
            <stop offset="0.080" stopColor="#ef7d1a" />
            <stop offset="0.170" stopColor="#f7e613" />
            <stop offset="0.270" stopColor="#8cc021" />
            <stop offset="0.380" stopColor="#6ab52e" />
            <stop offset="0.470" stopColor="#45b9a8" />
            <stop offset="0.540" stopColor="#2ab5ec" />
            <stop offset="0.620" stopColor="#2268b4" />
            <stop offset="0.720" stopColor="#2f4a9c" />
            <stop offset="0.830" stopColor="#9b4b9e" />
            <stop offset="0.920" stopColor="#e5107f" />
            <stop offset="1" stopColor="#e3142b" />
          </linearGradient>
          <linearGradient id="shade" x2="0" y2="1">
            <stop stopColor="#fff" />
            <stop offset="0.300" stopColor="#fff" stopOpacity="0.450" />
            <stop offset="0.580" stopColor="#fff" stopOpacity="0" />
            <stop offset="0.620" stopColor="#000" stopOpacity="0" />
            <stop offset="1" stopColor="#000" stopOpacity="0.950" />
          </linearGradient>
          <radialGradient id="green-spot">
            <stop stopColor="#5fae1c" />
            <stop offset="1" stopColor="#5fae1c" stopOpacity="0" />
          </radialGradient>
          <radialGradient id="blue-spot">
            <stop stopColor="#1c459c" />
            <stop offset="1" stopColor="#1c459c" stopOpacity="0" />
          </radialGradient>
        </defs>
        <path d="M0 0H216V30H0Z" fill="url(#hue)" />
        <path d="M0 0H216V30H0Z" fill="url(#shade)" />
        <ellipse cx="76" cy="14" rx="32" ry="11" fill="url(#green-spot)" />
        <ellipse cx="144" cy="16" rx="30" ry="12" fill="url(#blue-spot)" />
      </svg>
      <Grip />
    </div>
  );
}

function SwatchPanel() {
  const cell = "size-[14px] border-r border-b border-[#4a4a4a]";
  return (
    <div className="relative h-[115px] border-b-3 border-[#2a2a2a] pt-[6px] pr-[5px] pl-[6px]">
      <div className="flex h-[36px] items-start justify-between">
        <FillStroke />
        <div className="flex h-[22px] border border-[#2c2c2c]">
          <button aria-label="Liste görünümü" className="flex w-[25px] items-center justify-center bg-[#5c5c5c]">
            <Svg w={12} h={14} color="#ddd" crisp>
              <path d="M0 1.500H12M0 4.500H12M0 7.500H12M0 10.500H12M0 13.500H12" />
            </Svg>
          </button>
          <button aria-label="Küçük resim görünümü" className="flex w-[25px] items-center justify-center bg-[#3a3a3a]">
            <Svg w={14} h={14} color="#ddd" crisp>
              <path d="M0 2H4M5 2H9M10 2H14M0 7H4M5 7H9M10 7H14M0 12H4M5 12H9M10 12H14" strokeWidth="4" />
            </Svg>
          </button>
        </div>
      </div>
      <div className="flex h-[50px] overflow-hidden">
        <div className="grid h-[56px] flex-1 auto-rows-[14px] grid-cols-[repeat(15,14px)]">
          <button aria-label="Yok"><None size={13} /></button>
          <button aria-label="Kayıt">
            <Svg w={13} h={13} color="#222">
              <path d="M0 0H13V13H0Z" fill="#fff" stroke="none" />
              <circle cx="6.500" cy="6.500" r="4.500" />
              <circle cx="6.500" cy="6.500" r="2" />
              <path d="M6.500 0V13M0 6.500H13" />
            </Svg>
          </button>
          {swatchRows.flat().map((color) => (
            <button
              key={color}
              aria-label={color}
              className={clsx(
                color === PINK ? "size-[13px] border-2 border-black outline outline-white -outline-offset-1" : cell
              )}
              style={{ backgroundColor: color }}
            />
          ))}
          <button aria-label="Beyaz siyah" className={clsx(cell, "bg-linear-to-r from-white to-[#222]")} />
          <button aria-label="Sarı turuncu" className={clsx(cell, "bg-linear-to-r from-[#ffdf00] to-[#f08020]")} />
          <button aria-label="Gökyüzü" className={clsx(cell, "bg-linear-to-r from-[#1f7ac8] to-[#c8dcec]")} />
          <button aria-label="Desen">
            <Svg w={13} h={13}>
              <path d="M0 0H13V13H0Z" fill="#111" stroke="none" />
              <circle cx="6.500" cy="7" r="5" fill="#fff" stroke="#fff" />
              <path d="M4 5H6M8 5H10M6 7H8" stroke="#999" />
            </Svg>
          </button>
          <button aria-label="Yaprak">
            <Svg w={13} h={13}>
              <path d="M0 0H13V13H0Z" fill="#e3efc4" stroke="none" />
              <path d="M1 3L4 1M7 4L10 2M2 8L5 6M10 8L12 6" stroke="#6fa52a" strokeWidth="2.500" />
            </Svg>
          </button>
          <button aria-label="Doku">
            <Svg w={13} h={13}>
              <path d="M0 0H13V13H0Z" fill="#e8d8cc" stroke="none" />
              <path d="M1 2H4M6 1L8 4M10 2H12M2 6L5 7M8 6H11" stroke="#8c5a40" strokeWidth="1.500" />
            </Svg>
          </button>
        </div>
        <div className="flex w-3 flex-col items-center justify-between bg-[#333] py-[3px]">
          <Arrow dir="up" />
          <span className="mb-[7px] h-[11px] w-[11px] bg-[#969696]" />
          <Arrow />
        </div>
      </div>
      <div className="grid h-5 grid-cols-[28px_28px_28px_28px_28px_27px_26px_26px] items-center pl-[2px]">
        <button aria-label="Örnek kitaplıkları">
          <Svg w={18} h={12}>
            <path d="M1 1V11M4 1V11M6.500 1L11 11" strokeWidth="2" />
            <path d="M0 11.500H7" />
            <path d="M12.500 8.500H18L15.200 11.500Z" {...solid} />
          </Svg>
        </button>
        <button aria-label="Renk teması">
          <Svg w={12} h={12}>
            <circle cx="4" cy="6" r="2" strokeWidth="2" />
            <path d="M5 5L10 1.500M5 7L10 10.500" strokeWidth="1.500" />
            <path d="M8 0H11V3H8ZM8 9H11V12H8Z" {...solid} />
          </Svg>
        </button>
        <button aria-label="Kitaplığa ekle" className="-ml-1">
          <Svg w={17} h={12}>
            <path d="M5 10.500H0.500V1.500H5L6 3.500H13V5" />
            <circle cx="8.500" cy="8" r="3" />
            <circle cx="12.500" cy="8" r="3" />
          </Svg>
        </button>
        <button aria-label="Örnek türleri">
          <Svg w={18} h={12}>
            <path d="M1.500 1.500H10.500V10.500H1.500ZM1.500 4.500H10.500M1.500 7.500H10.500M4.500 1.500V10.500M7.500 1.500V10.500" />
            <path d="M12 8.500H17L14.500 11.500Z" {...solid} />
          </Svg>
        </button>
        <button aria-label="Örnek seçenekleri">
          <Svg w={11} h={11}>
            <path d="M0.500 0.500H10.500V10.500H0.500ZM2 3.500H3M4 3.500H9M2 5.500H3M4 5.500H9M2 7.500H3M4 7.500H9" />
          </Svg>
        </button>
        <button aria-label="Yeni renk grubu">
          <Svg w={13} h={10}>
            <path d="M0 1H4L5 3H12V10H0Z" {...solid} />
          </Svg>
        </button>
        <button aria-label="Yeni örnek"><NewItem /></button>
        <button aria-label="Örneği sil"><Trash /></button>
      </div>
      <Grip />
    </div>
  );
}

function GradientPanel() {
  const row = "flex h-[18px] items-center";
  const name = "w-[50px] shrink-0 pr-[5px] flex justify-end";
  return (
    <div className="relative h-[219px] border-b-3 border-[#2a2a2a] px-[6px] pt-2">
      <div className="flex">
        <div className="w-[36px]">
          <button aria-label="Degrade listesi" className="flex items-center gap-1">
            <span className="size-[30px] shrink-0 border border-[#222] bg-linear-to-r/srgb from-white to-[#222]" />
            <Arrow size={6} />
          </button>
          <div className="mt-[6px]">
            <FillStroke />
          </div>
          <button aria-label="Degradeyi ters çevir" className="mt-[10px] ml-[7px]">
            <Svg w={16} h={13} color="#777" crisp>
              <path d="M0.500 0.500H8.500V4.500H0.500ZM5.500 7.500H13.500V12.500H5.500Z" />
              <path d="M10 1H15L12.500 4ZM0 11H5L2.500 8Z" fill="#777" stroke="none" />
            </Svg>
          </button>
        </div>
        <div className="flex flex-1 flex-col gap-2">
          <div className={row}>
            <span className={name}>Tür:</span>
            <Combo label="Degrade türü" tone="flat" className="flex-1" />
          </div>
          <div className={row}>
            <span className={clsx(name, "text-[#999]")}>Kontur:</span>
            <div className="flex border border-[#363636]">
              {["M4 15V3H17M9 15V7H17", "M4 15V3L9 8V15M9 6H17", "M4 15V3H17M7 15V6H17M10 15V9H17"].map((d) => (
                <button key={d} disabled aria-label="Kontur degradesi" className="border-r border-[#363636] last:border-r-0">
                  <Svg w={22} h={17} color="#737373">
                    <path d={d} />
                  </Svg>
                </button>
              ))}
            </div>
          </div>
          <div className={row}>
            <span className={name}>
              <Svg w={14} h={12} color="#777"><path d="M12 10.500H1L10 1.500M8 10C8 8 8 7 6 6" /></Svg>
            </span>
            <Combo label="Açı" tone="off" className="w-[68px]" />
          </div>
          <div className={row}>
            <span className={name}>
              <Svg w={16} h={14} color="#777">
                <circle cx="10" cy="6" r="4" />
                <path d="M2.500 1V12M1 3L2.500 1L4 3M1 10L2.500 12L4 10M6 12.500H14M4 6H16" />
              </Svg>
            </span>
            <Combo label="En boy oranı" tone="off" className="w-[68px]" />
          </div>
        </div>
      </div>
      <div className="mt-[15px] flex items-center justify-between pr-[6px] pl-[3px]">
        <div className="h-5 w-[196px] border border-[#2c2c2c] bg-linear-to-r/srgb from-white via-[#999] via-50% to-black" />
        <button aria-label="Durağı sil" disabled><Trash color="#777" /></button>
      </div>
      <div className="mt-[27px] ml-[36px] flex flex-col gap-2 text-[#999]">
        <div className={row}>
          <span className={name}>Opaklık:</span>
          <Combo label="Durak opaklığı" tone="off" className="w-[68px]" />
        </div>
        <div className={row}>
          <span className={name}>Konum:</span>
          <Combo label="Durak konumu" tone="off" className="w-[68px]" />
        </div>
      </div>
      <Grip />
    </div>
  );
}

function LayersPanel() {
  return (
    <div className="flex min-h-0 flex-1 flex-col px-[5px] pt-[6px]">
      <div className="flex-1 border border-[#2c2c2c]">
        <div className="relative flex h-[21px] items-stretch border-b border-[#2c2c2c] bg-[#5a6474]">
          <button aria-label="Görünürlük" className="flex w-[21px] items-center justify-center border-r border-[#333b46]">
            <Svg w={13} h={9}>
              <path d="M0.500 4.500C3 0 10 0 12.500 4.500C10 8.500 3 8.500 0.500 4.500Z" />
              <circle cx="6.500" cy="4" r="2" fill={ICON} />
            </Svg>
          </button>
          <button aria-label="Kilitle" className="w-[21px] border-r border-[#333b46]" />
          <span className="w-[6px] border-r border-[#333b46] bg-[#5580e0]" />
          <button aria-label="Genişlet" className="ml-1 self-center">
            <Arrow dir="right" />
          </button>
          <span className="ml-[9px] flex size-[18px] justify-center self-center border border-black bg-white">
            <span className="w-[5px] bg-[#d81b70]" />
          </span>
          <span className="ml-[5px] self-center text-[10px]">katman 1</span>
          <button aria-label="Hedef" className="ml-auto flex w-[35px] items-center border-l border-[#333b46] pl-[5px]">
            <Svg w={9} h={9}>
              <circle cx="4.500" cy="4.500" r="3.800" />
            </Svg>
          </button>
          <Svg w={6} h={5} className="absolute top-0 right-0">
            <path d="M0 0H6V5Z" {...solid} />
          </Svg>
        </div>
      </div>
      <div className="flex h-[19px] shrink-0 items-center pt-px pr-[22px] leading-3">
        <span className="flex-1">1 Katman</span>
        <div className="flex items-center gap-[14px]">
          <button aria-label="Nesneyi bul">
            <Svg w={12} h={12} color="#777">
              <circle cx="7.500" cy="4.500" r="3.500" />
              <path d="M5 7L1 11.500" strokeWidth="1.500" />
            </Svg>
          </button>
          <button aria-label="Kırpma maskesi">
            <Svg w={12} h={12} crisp>
              <path d="M0.500 0.500H7.500V7.500H0.500ZM3.500 3.500H10.500V10.500H3.500Z" />
              <path d="M4 4H8V8H4Z" {...solid} />
            </Svg>
          </button>
          <button aria-label="Yeni alt katman">
            <Svg w={14} h={12}>
              <path d="M6 2H14V11H10V6H6Z" {...solid} />
              <path d="M0.500 0V4.500H5M3 2.500L5 4.500L3 6.500M7 8L9 11" />
            </Svg>
          </button>
          <button aria-label="Yeni katman"><NewItem /></button>
          <button aria-label="Katmanı sil" disabled><Trash color="#707070" /></button>
        </div>
      </div>
    </div>
  );
}

function ColorDock() {
  return (
    <section className="flex w-[241px] shrink-0 flex-col border-r border-[#262626] bg-[#4a4a4a] text-[10px] font-semibold">
      <DockHeader />
      <TabBar tabs={["Renk", "Renk Kılavuzu"]} />
      <ColorPanel />
      <TabBar tabs={["Renk Örnekleri"]} updown={false} />
      <SwatchPanel />
      <TabBar tabs={["Kontur", "Degrade", "Saydamlık"]} active={1} />
      <GradientPanel />
      <TabBar tabs={["Kitaplıklar", "Görünüm", "Grafik Stilleri"]} updown={false} menu={false} />
      <div className="h-1 shrink-0 border-b-3 border-[#2a2a2a]" />
      <TabBar tabs={["Katmanlar", "Çalışma Yüzeyleri"]} updown={false} />
      <LayersPanel />
    </section>
  );
}

export default function App() {
  return (
    <div className="relative flex h-screen flex-col overflow-hidden bg-[#4a4a4a] font-['Roboto','Noto_Sans',sans-serif] text-[#dcdcdc] select-none">
      <MenuBar />
      <ControlBar />
      <div className="flex min-h-0 flex-1">
        <Toolbox />
        <Document />
        <AlignDock />
        <ColorDock />
      </div>
      <Svg w={12} h={20} className="absolute top-0 left-[166px]">
        <path d="M0.500 0V15.500L4 12L6.500 18L9 17L6.500 11.500H11Z" fill="#fff" stroke="#111" />
      </Svg>
    </div>
  );
}
